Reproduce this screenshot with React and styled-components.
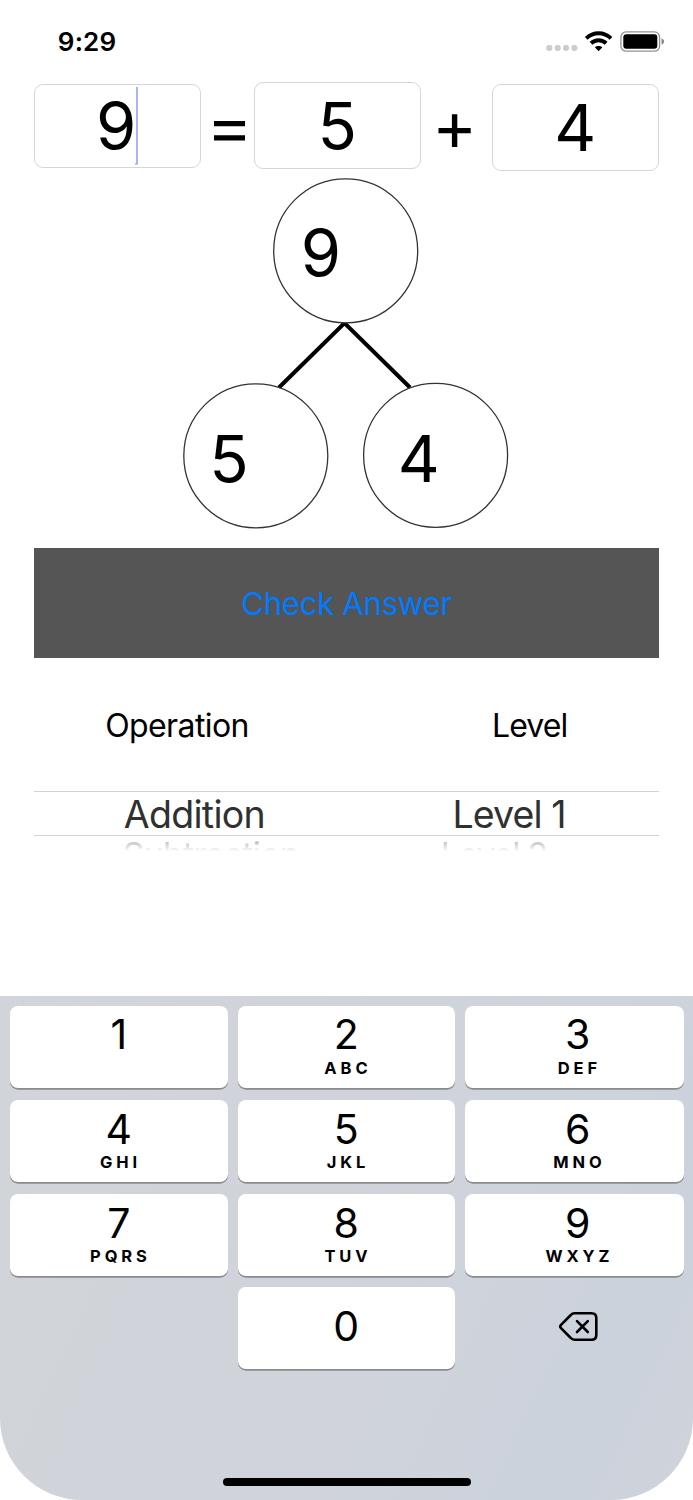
import React from "react";
import styled, { createGlobalStyle } from "styled-components";

const GlobalStyle = createGlobalStyle`
  *, *::before, *::after { box-sizing: border-box; }
  html, body { margin: 0; padding: 0; background: #fff; }
  body { font-family: Inter, "Liberation Sans", sans-serif; color: #000; }
  button { font-family: inherit; border: 0; padding: 0; margin: 0; color: inherit; }
`;

const Screen = styled.main`
  width: 693px;
  height: 1500px;
  display: flex;
  flex-direction: column;
  background: #fff;
  overflow: hidden;
`;

const StatusBar = styled.header`
  height: 82px;
  flex: none;
  display: flex;
  justify-content: space-between;
  align-items: flex-start;
  padding: 26px 28px 0 57.8px;
`;

const Clock = styled.time`
  font-size: 26px;
  line-height: 32px;
  font-weight: 600;
  letter-spacing: 0.2px;
`;

const StatusIcons = styled.svg`
  display: block;
  width: 120px;
  height: 30px;
`;

const Equation = styled.section`
  height: 90px;
  flex: none;
  display: flex;
  align-items: flex-start;
  padding: 0 34px 0 33.5px;
`;

const Field = styled.div`
  width: 167.5px;
  height: ${(p) => p.$height}px;
  margin-top: ${(p) => p.$top}px;
  border: 1.3px solid #d6d6d6;
  border-radius: 9px;
  display: flex;
  justify-content: center;
  align-items: center;
  font-size: 65px;
  line-height: 80px;
  padding-top: 1px;
  padding-right: ${(p) => p.$shift || 0}px;
`;

const Caret = styled.svg`
  display: block;
  width: 4px;
  height: 78px;
  margin: -1px -5px 0 -2px;
`;

const Operator = styled.svg`
  display: block;
  width: ${(p) => p.$width}px;
  height: 90px;
  flex: none;
`;

const Bond = styled.section`
  position: relative;
  height: 375.5px;
  flex: none;
`;

const BondLines = styled.svg`
  display: block;
  width: 693px;
  height: 375px;
`;

const BondNumber = styled.span`
  position: absolute;
  left: ${(p) => p.$x - 40}px;
  top: ${(p) => p.$y - 40}px;
  width: 80px;
  text-align: center;
  font-size: 65px;
  line-height: 80px;
`;

const CheckButton = styled.button`
  width: 625.5px;
  height: 110.5px;
  flex: none;
  margin: 0 0 0 33.75px;
  padding-top: 2px;
  background: #555;
  color: #007aff;
  font-size: 31.5px;
  letter-spacing: -0.5px;
`;

const Headings = styled.div`
  height: 133px;
  flex: none;
  display: flex;
  align-items: center;
  padding: 2px 34px 0 33.5px;
`;

const Heading = styled.h2`
  margin: 0;
  width: ${(p) => p.$width}px;
  padding-left: ${(p) => p.$left || 0}px;
  text-align: center;
  font-size: 32px;
  font-weight: 400;
  letter-spacing: ${(p) => p.$tracking}px;
`;

const Picker = styled.section`
  width: 625.5px;
  height: 205px;
  flex: none;
  margin-left: 33.75px;
`;

const PickerRow = styled.div`
  display: flex;
  height: 45.2px;
  border-top: 1.4px solid #d2d2d2;
  border-bottom: 1.4px solid #d2d2d2;
  color: #303030;
  font-size: 37.5px;
  line-height: 45.5px;
`;

const NextRow = styled(PickerRow)`
  border: 0;
  color: #bdbdbd;
  font-size: 34px;
  line-height: 38px;
  mask-image: linear-gradient(#000 5px, transparent 15.5px);
`;

const Option = styled.span`
  white-space: pre;
  width: ${(p) => p.$width}px;
  padding-left: ${(p) => p.$left}px;
  letter-spacing: ${(p) => p.$tracking || 0}px;
`;

const Keyboard = styled.section`
  height: 504px;
  flex: none;
  display: flex;
  flex-direction: column;
  align-items: center;
  justify-content: space-between;
  padding: 10px 9.5px 14px 10px;
  background: linear-gradient(115deg, #d1d4d8 0%, #d0d3da 45%, #cfd3db 65%, #cbd2dc 85%, #d0d3da 100%);
  border-radius: 0 0 82px 82px;
`;

const Keys = styled.div`
  width: 100%;
  display: grid;
  grid-template-columns: 217.5px 217.5px 218.5px;
  grid-auto-rows: 82px;
  gap: 11.75px 10px;
`;

const Key = styled.button`
  grid-column: ${(p) => p.$column};
  display: flex;
  flex-direction: column;
  align-items: center;
  justify-content: flex-start;
  padding-top: ${(p) => p.$top}px;
  padding-left: ${(p) => (p.$column === 3 ? 7 : 0)}px;
  border-radius: 8px;
  background: #fff;
  box-shadow: 0 1.7px 0 #898b8f;
`;

const Digit = styled.span`
  font-size: 41px;
  line-height: 40px;
  font-weight: 380;
`;

const Letters = styled.span`
  font-size: 16.5px;
  line-height: 20px;
  font-weight: 650;
  letter-spacing: 3.9px;
  margin-top: 3.5px;
  padding-left: 3.4px;
`;

const DeleteKey = styled.button`
  grid-column: 3;
  display: flex;
  justify-content: center;
  align-items: center;
  padding: 0 0 3px 7px;
  background: transparent;
`;

const HomeIndicator = styled.div`
  width: 248px;
  height: 8.5px;
  border-radius: 5px;
  background: #000;
`;

const KEYS = [
  ["1", "", 1, 8], ["2", "ABC", 2, 8], ["3", "DEF", 3, 8],
  ["4", "GHI", 1, 9], ["5", "JKL", 2, 9], ["6", "MNO", 3, 9],
  ["7", "PQRS", 1, 9], ["8", "TUV", 2, 9], ["9", "WXYZ", 3, 9],
  ["0", "", 2, 19],
];

export default function App() {
  return (
    <Screen>
      <GlobalStyle />
      <StatusBar>
        <Clock>9:29</Clock>
        <StatusIcons viewBox="545 26 120 30">
          {[549.3, 557.7, 566, 574.4].map((x) => (
            <rect key={x} x={x - 3} y="45" width="6" height="6" rx="2.4" fill="#ccc" />
          ))}
          <g fill="none" stroke="#000" strokeWidth="3.9">
            <path d="M586.2 38.3 C593.2 31.5 604 31.5 611 38.3" />
            <path d="M591 43.3 C595.4 39.2 601.8 39.2 606.2 43.3" />
          </g>
          <path d="M598.6 51.2 L594.8 47.3 C597 45.4 600.2 45.4 602.4 47.3 Z" />
          <rect x="620.9" y="31.9" width="38.7" height="19.3" rx="5.2" fill="none" stroke="#929292" strokeWidth="1.3" />
          <rect x="623.3" y="34.3" width="34" height="14.5" rx="3" />
          <path d="M661.5 38.3 C665 39.8 665 43.3 661.5 44.8 Z" fill="#888" />
        </StatusIcons>
      </StatusBar>

      <Equation>
        <Field $top={1.8} $height={84} $shift={5}>
          9
          <Caret viewBox="0 0 4 78" fill="none" stroke="#8fa5f5">
            <path d="M3 0V77" strokeWidth="1.6" />
            <path d="M1 77H3.5" strokeWidth="1.3" />
          </Caret>
        </Field>
        <Operator $width={53.3} viewBox="201 82 53.3 90">
          <path d="M214 123.6H245M214 137.8H245" stroke="#000" strokeWidth="5.3" />
        </Operator>
        <Field $top={0} $height={87.3} $shift={1}>5</Field>
        <Operator $width={70.3} viewBox="421.8 82 70.3 90">
          <path d="M439.3 130.6H471.5M455.4 114.2V147" stroke="#000" strokeWidth="5.4" />
        </Operator>
        <Field $top={1.8} $height={87}>4</Field>
      </Equation>

      <Bond>
        <BondLines viewBox="0 172 693 375" fill="none" stroke="#000">
          <path d="M279 387.5L344.5 323L410 387.5" strokeWidth="4" />
          <g fill="#fff" stroke="#333" strokeWidth="1.3">
            <circle cx="345.7" cy="250.8" r="72" />
            <circle cx="255.8" cy="455.8" r="72" />
            <circle cx="435.6" cy="455.3" r="72" />
          </g>
        </BondLines>
        <BondNumber $x={321} $y={81}>9</BondNumber>
        <BondNumber $x={229} $y={287}>5</BondNumber>
        <BondNumber $x={418.8} $y={287}>4</BondNumber>
      </Bond>

      <CheckButton>Check Answer</CheckButton>

      <Headings>
        <Heading $width={287} $tracking={-0.6}>Operation</Heading>
        <Heading $width={338.5} $left={80} $tracking={-0.9}>Level</Heading>
      </Headings>

      <Picker>
        <PickerRow>
          <Option $width={312} $left={90} $tracking={-0.7}>Addition</Option>
          <Option $width={313} $left={106.7} $tracking={-0.9}>Level 1</Option>
        </PickerRow>
        <NextRow>
          <Option $width={312} $left={89} $tracking={-0.8}>Subtraction</Option>
          <Option $width={313} $left={95} $tracking={-1.3}>Level 2</Option>
        </NextRow>
      </Picker>

      <Keyboard>
        <Keys>
          {KEYS.map(([digit, letters, column, top]) => (
            <Key key={digit} $column={column} $top={top}>
              <Digit>{digit}</Digit>
              {letters && <Letters>{letters}</Letters>}
            </Key>
          ))}
          <DeleteKey aria-label="Delete">
            <svg width="40" height="31" viewBox="558 1311 40 31" fill="none" stroke="#000" strokeWidth="2.6" strokeLinecap="round" strokeLinejoin="round">
              <path d="M574.5 1313.3H591.5Q596.3 1313.3 596.3 1318V1335Q596.3 1339.7 591.5 1339.7H574.5Q572.3 1339.7 570.8 1338L561 1328.2Q559.3 1326.5 561 1324.8L570.8 1315Q572.3 1313.3 574.5 1313.3Z" />
              <path d="M577 1321.2L587.8 1332M587.8 1321.2L577 1332" />
            </svg>
          </DeleteKey>
        </Keys>
        <HomeIndicator />
      </Keyboard>
    </Screen>
  );
}
